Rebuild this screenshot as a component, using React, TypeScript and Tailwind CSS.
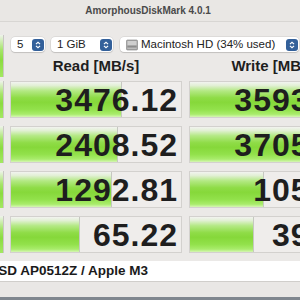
const rows = [
  { read: '3476.12', readBar: 111, write: '3593.54', writeBar: 112 },
  { read: '2408.52', readBar: 107, write: '3705.37', writeBar: 112 },
  { read: '1292.81', readBar: 101, write: '105.17', writeBar: 74 },
  { read: '65.22', readBar: 69, write: '39.84', writeBar: 64 },
];

export default function App() {
  return (
    <div className="flex h-[300px] w-[300px] flex-col overflow-hidden bg-[#ebe9e7] font-['Liberation_Sans',Arial,sans-serif] text-[#1e1e1e]">
      <div className="flex h-[22px] shrink-0 items-center justify-center border-b border-[#d8d6d3] bg-[#e9e7e4] pr-[4px] text-[10px] font-bold text-[#4a4a4a]">
        AmorphousDiskMark 4.0.1
      </div>

      <div className="flex flex-col pt-[13px]">
        <div className="flex h-[42px]">
          <GreenStub />
          <div className="ml-[6px] flex flex-1 flex-col">
            <div className="mt-[2px] flex h-[15px] items-center pl-[1px]">
              <Select className="w-[34px]" label="5" />
              <Select className="ml-[6px] w-[62px]" label="1 GiB" />
              <Select className="ml-[7px] w-[179px] shrink-0" label="Macintosh HD (34% used)" drive />
            </div>
            <div className="mt-[3px] flex h-[22px] items-center">
              <div className="w-[172px] shrink-0 text-center text-[15px] font-bold">Read [MB/s]</div>
              <div className="ml-[7px] w-[172px] shrink-0 text-center text-[15px] font-bold">Write [MB/s]</div>
            </div>
          </div>
        </div>

        <div className="mt-[4px] flex flex-col gap-[8px]">
          {rows.map(r => (
            <div key={r.read} className="flex h-[37px]">
              <GreenStub />
              <div className="ml-[6px] flex">
                <ResultCell value={r.read} bar={r.readBar} />
                <ResultCell value={r.write} bar={r.writeBar} className="ml-[7px]" />
              </div>
            </div>
          ))}
        </div>
      </div>

      <div className="mt-[8px] flex h-[21px] shrink-0 items-center border-b border-[#d0cecb] bg-white">
        <div className="flex w-[148px] shrink-0 justify-end">
          <span className="whitespace-nowrap text-[13.5px] font-bold text-[#1a1a1a]">
            APPLE SSD AP0512Z / Apple M3
          </span>
        </div>
      </div>
      <div className="flex-1 bg-[#e9e7e5]" />
      <div className="h-[3px] shrink-0 bg-[#7f868e]" />
    </div>
  );
}

function GreenStub() {
  return (
    <div className="h-full w-[4px] shrink-0 border-r border-[#c9c7c4] bg-[linear-gradient(to_bottom,#eef3ea_0%,#a6e56a_35%,#8bdc40_60%,#a3e862_100%)]" />
  );
}

function ResultCell({ value, bar, className = '' }: { value: string; bar: number; className?: string }) {
  return (
    <div
      className={`relative flex h-full w-[172px] shrink-0 items-center justify-end border border-[#d3d1ce] bg-[#efedeb] pr-[3px] ${className}`}>
      <div
        className="absolute top-0 bottom-0 left-0 border-r border-[#c5c8c0] bg-[linear-gradient(to_bottom,#f2f3f0_0%,#e2f0d5_10%,#b4e985_25%,#8fdc47_45%,#86d83a_58%,#92e14b_78%,#a9ec6c_92%,#d6f6b5_100%)]"
        style={{ width: bar }}
      />
      <span className="relative text-[32px] leading-none font-bold tracking-[1px] text-[#1e1e1e]">{value}</span>
    </div>
  );
}

function Select({ label, className = '', drive }: { label: string; className?: string; drive?: boolean }) {
  return (
    <div
      className={`flex h-[15px] items-center rounded-[4px] bg-white pr-[1px] pl-[6px] shadow-[0_0_0_0.5px_rgba(0,0,0,0.12),0_1px_1px_rgba(0,0,0,0.12)] ${className}`}>
      {drive && <DriveIcon />}
      <span className="flex-1 truncate text-[11.5px] leading-none text-[#222]">{label}</span>
      <div className="flex h-[12px] w-[12px] shrink-0 items-center justify-center rounded-[3px] bg-[#33609a]">
        <svg viewBox="0 0 12 12" className="h-[10px] w-[10px]" fill="none" stroke="white" strokeWidth="1.3">
          <path d="M3.5 5 6 2.7 8.5 5" />
          <path d="M3.5 7 6 9.3 8.5 7" />
        </svg>
      </div>
    </div>
  );
}

function DriveIcon() {
  return (
    <svg viewBox="0 0 12 12" className="mr-[3px] h-[12px] w-[12px] shrink-0">
      <rect x="0.5" y="1" width="11" height="10" rx="1" fill="#a9a9a9" stroke="#7d7d7d" strokeWidth="0.6" />
      <rect x="1.5" y="2" width="9" height="4" fill="#cfcfcf" />
      <rect x="1.5" y="7" width="9" height="1.2" fill="#8c8c8c" />
      <rect x="1.5" y="9" width="9" height="1" fill="#bdbdbd" />
    </svg>
  );
}
